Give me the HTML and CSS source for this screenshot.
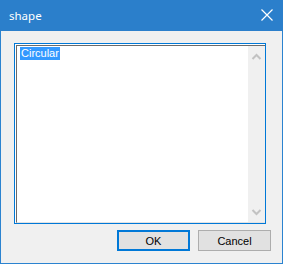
FILE: index.html
```html
<!DOCTYPE html>
<html lang="en">
<head>
    <meta charset="UTF-8">
    <title>shape</title>
    <link rel="stylesheet" href="styles.css">
</head>
<body>
    <div class="ventana">
        <div class="titulo">
            <span class="titulo-texto">shape</span>
            <svg class="cerrar" width="12" height="12" viewBox="0 0 12 12">
                <path d="M0.5 0.5 L11.5 11.5 M11.5 0.5 L0.5 11.5" stroke="#fff" stroke-width="1.2" fill="none"/>
            </svg>
        </div>
        <div class="cuerpo">
            <div class="marco">
                <div class="lista">
                    <div class="items">
                        <span class="sel">Circular</span>
                    </div>
                    <div class="barra">
                        <svg width="17" height="17" viewBox="0 0 17 17">
                            <path d="M4.5 10 L8.5 6 L12.5 10" stroke="#c2c2c2" stroke-width="2" fill="none"/>
                        </svg>
                        <svg width="17" height="17" viewBox="0 0 17 17">
                            <path d="M4.5 7 L8.5 11 L12.5 7" stroke="#c2c2c2" stroke-width="2" fill="none"/>
                        </svg>
                    </div>
                </div>
            </div>
            <div class="botones">
                <button class="boton defecto">OK</button>
                <button class="boton">Cancel</button>
            </div>
        </div>
    </div>
</body>
</html>
```

FILE: styles.css
```css
body {
    margin: 0;
    font-family: 'Liberation Sans', Arial, sans-serif;
}

.ventana {
    width: 283px;
    height: 264px;
    display: flex;
    flex-direction: column;
}

.titulo {
    height: 31px;
    background: #2b7fcb;
    color: white;
    display: flex;
    align-items: center;
    justify-content: space-between;
    padding: 0 10px 0 9px;
    box-sizing: border-box;
    flex-shrink: 0;
}

.titulo-texto {
    font-family: 'Noto Sans', sans-serif;
    font-size: 11.5px;
    margin-top: -1px;
}

.cerrar {
    display: block;
    margin-top: -1px;
}

.cuerpo {
    flex-grow: 1;
    background: #f0f0f0;
    border: 1px solid #2b83d0;
    border-top: none;
    padding: 12px 11px 12px 13px;
    display: flex;
    flex-direction: column;
}

.marco {
    width: 252px;
    height: 181px;
    box-sizing: border-box;
    border: 1px solid #0078d7;
    background: white;
    padding: 1px 0 0 1px;
}

.lista {
    height: 100%;
    box-sizing: border-box;
    border-left: 1px solid #6a6a6a;
    border-top: 1px solid #6a6a6a;
    border-bottom: 1px solid #e3e3e3;
    display: flex;
}

.items {
    flex-grow: 1;
    padding: 1px 0 0 3px;
    font-size: 11px;
    line-height: 13px;
}

.sel {
    display: inline-block;
    vertical-align: top;
    background: #3399ff;
    color: white;
    padding: 0 1px;
}

.barra {
    width: 17px;
    background: #f0f0f0;
    display: flex;
    flex-direction: column;
    justify-content: space-between;
    padding: 3px 0 2px;
}

.barra svg {
    display: block;
}

.botones {
    display: flex;
    justify-content: flex-end;
    gap: 8px;
    margin-top: 6px;
}

.boton {
    width: 73px;
    height: 21px;
    padding: 0;
    background: #e1e1e1;
    border: 1px solid #adadad;
    font-family: 'Liberation Sans', Arial, sans-serif;
    font-size: 11px;
    color: black;
}

.defecto {
    border: 2px solid #0078d7;
}
```
